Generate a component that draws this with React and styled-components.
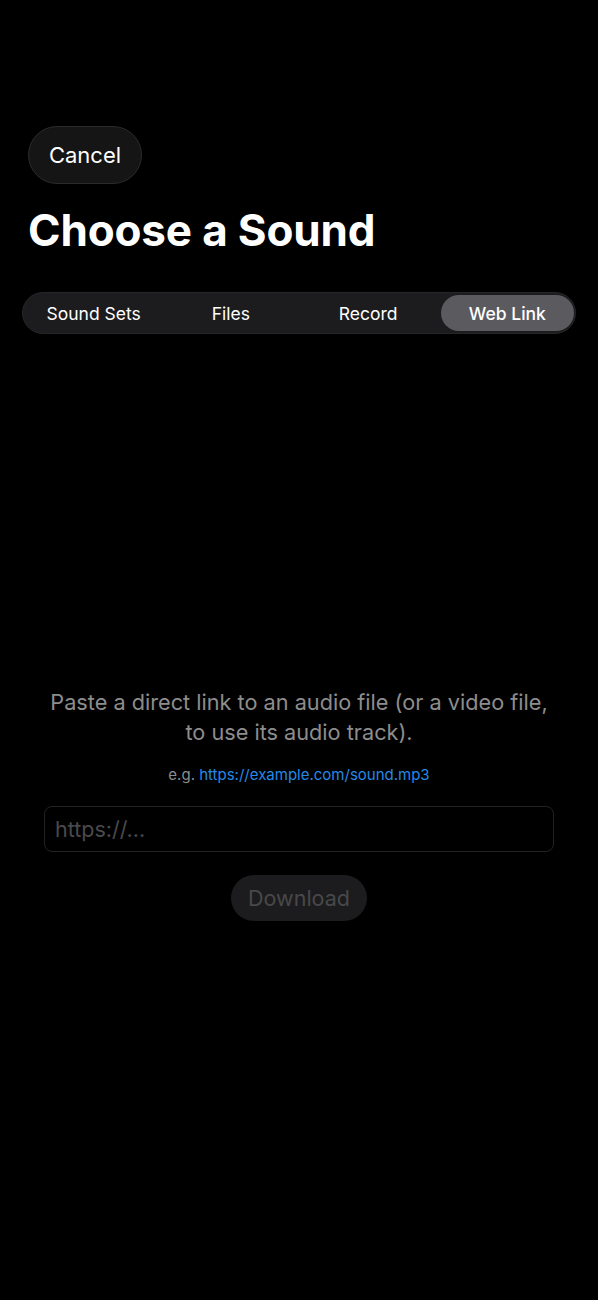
import React, { useState } from "react";
import styled, { createGlobalStyle } from "styled-components";

const GlobalStyle = createGlobalStyle`
  html, body {
    margin: 0;
    padding: 0;
    background: #000000;
  }
  body {
    font-family: Inter, "Noto Sans", sans-serif;
    color: #ffffff;
    -webkit-font-smoothing: antialiased;
  }
`;

const Screen = styled.div`
  min-height: 1300px;
  background: #000000;
  display: flex;
  flex-direction: column;
  padding: 126px 22px 0;
  box-sizing: border-box;
`;

const Header = styled.div`
  display: flex;
  flex-direction: column;
  align-items: flex-start;
  padding-left: 6px;
`;

const CancelButton = styled.button`
  height: 58px;
  width: 114px;
  border-radius: 29px;
  background: #151515;
  border: 1px solid #2b2b2b;
  color: #ffffff;
  font-family: Inter, sans-serif;
  font-size: 22px;
  font-weight: 400;
  padding: 0;
  cursor: pointer;
`;

const Title = styled.h1`
  margin: 20px 0 0;
  font-size: 44px;
  line-height: 53px;
  font-weight: 700;
  letter-spacing: -0.15px;
  color: #ffffff;
`;

const Segments = styled.div`
  margin-top: 35px;
  height: 42px;
  box-sizing: border-box;
  display: grid;
  grid-template-columns: repeat(4, 1fr);
  padding: 2px 1px 2px 2px;
  background: #1c1c1e;
  border: 1px solid #262628;
  border-radius: 21px;
`;

const Segment = styled.button`
  border: none;
  border-radius: 19px;
  margin-left: ${(p) => (p.$active ? "4px" : "0")};
  background: ${(p) => (p.$active ? "#5b5b5f" : "transparent")};
  color: #ffffff;
  font-family: Inter, sans-serif;
  font-size: 17.5px;
  font-weight: ${(p) => (p.$active ? 500 : 400)};
  padding: 0;
  cursor: pointer;
`;

const Body = styled.div`
  margin-top: 353px;
  display: flex;
  flex-direction: column;
  align-items: center;
  padding: 0 22px;
`;

const Hint = styled.p`
  margin: 0;
  text-align: center;
  font-size: 21.7px;
  line-height: 30px;
  color: #8d8d8d;
`;

const Example = styled.p`
  margin: 18px 0 0;
  font-size: 15px;
  line-height: 20px;
  color: #8d8d8d;
`;

const Link = styled.span`
  color: #2589e6;
`;

const UrlInput = styled.input`
  margin-top: 21px;
  width: 100%;
  height: 46px;
  box-sizing: border-box;
  background: #000000;
  border: 1px solid #232325;
  border-radius: 8px;
  padding: 0 10px;
  color: #ffffff;
  font-family: Inter, sans-serif;
  font-size: 21.5px;
  outline: none;

  &::placeholder {
    color: #4a4a4c;
  }
`;

const DownloadButton = styled.button`
  margin-top: 23px;
  height: 46px;
  width: 136px;
  border: none;
  border-radius: 23px;
  background: #1c1c1e;
  color: #48484a;
  font-family: Inter, sans-serif;
  font-size: 21.5px;
  padding: 0;
`;

const TABS = ["Sound Sets", "Files", "Record", "Web Link"];

export default function App() {
  const [tab, setTab] = useState("Web Link");
  const [url, setUrl] = useState("");

  return (
    <>
      <GlobalStyle />
      <Screen>
        <Header>
          <CancelButton>Cancel</CancelButton>
          <Title>Choose a Sound</Title>
        </Header>
        <Segments>
          {TABS.map((t) => (
            <Segment key={t} $active={t === tab} onClick={() => setTab(t)}>
              {t}
            </Segment>
          ))}
        </Segments>
        <Body>
          <Hint>
            Paste a direct link to an audio file (or a video file,
            <br />
            to use its audio track).
          </Hint>
          <Example>
            e.g. <Link>https://example.com/sound.mp3</Link>
          </Example>
          <UrlInput
            placeholder="https://..."
            value={url}
            onChange={(e) => setUrl(e.target.value)}
          />
          <DownloadButton disabled={!url}>Download</DownloadButton>
        </Body>
      </Screen>
    </>
  );
}
